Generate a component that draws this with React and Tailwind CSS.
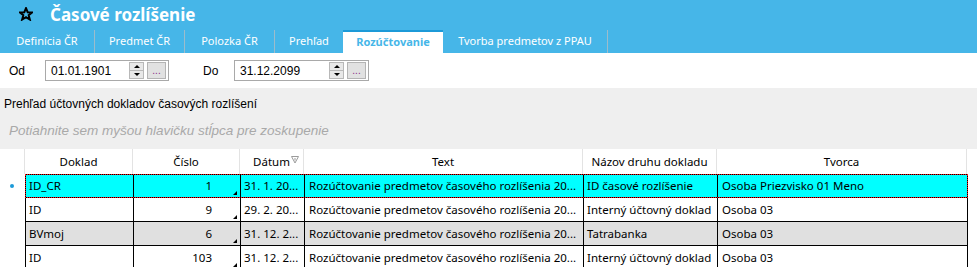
import React from "react";

const seg = { fontFamily: '"Noto Sans", "Open Sans", sans-serif' };
const ari = { fontFamily: '"Liberation Sans", Arial, sans-serif' };

function Star() {
  return (
    <svg width="14" height="14" viewBox="0 0 24 24" className="block">
      <polygon
        points="12,2 14.9,8.9 22.5,9.3 16.6,14.1 18.6,21.5 12,17.3 5.4,21.5 7.4,14.1 1.5,9.3 9.1,8.9"
        fill="none"
        stroke="#000"
        strokeWidth="3.4"
        strokeLinejoin="miter"
      />
    </svg>
  );
}

function DateBox({ value, width }) {
  return (
    <div
      className="flex items-center h-[21px] border border-[#a9a9a9] bg-white pl-[5px] pr-[2px]"
      style={{ width }}
    >
      <span className="flex-1 text-[12px] text-black leading-none" style={ari}>
        {value}
      </span>
      <div className="flex flex-col w-[15px] h-[17px] mr-[3px]">
        <div className="flex-1 flex items-center justify-center bg-[#e8e8e8] border border-[#b8b8b8]">
          <div className="w-0 h-0 border-l-[3px] border-r-[3px] border-b-[3px] border-l-transparent border-r-transparent border-b-black" />
        </div>
        <div className="flex-1 flex items-center justify-center bg-[#e8e8e8] border border-t-0 border-[#b8b8b8]">
          <div className="w-0 h-0 border-l-[3px] border-r-[3px] border-t-[3px] border-l-transparent border-r-transparent border-t-black" />
        </div>
      </div>
      <div className="w-[19px] h-[17px] bg-[#e1e1e1] border border-[#b4b4b4] flex items-end justify-center pb-[2px]">
        <span className="text-[10px] leading-none text-[#8a2f8a]" style={ari}>...</span>
      </div>
    </div>
  );
}

const cols = [25, 108, 107, 64, 279, 134, 250];

const rows = [
  { bg: "bg-[#00ffff]", focus: true, d: "ID_CR", c: "1", dt: "31. 1. 20...", n: "ID časové rozlíšenie", t: "Osoba Priezvisko 01 Meno" },
  { bg: "bg-white", d: "ID", c: "9", dt: "29. 2. 20...", n: "Interný účtovný doklad", t: "Osoba 03" },
  { bg: "bg-[#e0e0e0]", d: "BVmoj", c: "6", dt: "31. 12. 2...", n: "Tatrabanka", t: "Osoba 03" },
  { bg: "bg-white", d: "ID", c: "103", dt: "31. 12. 2...", n: "Interný účtovný doklad", t: "Osoba 03" },
];

export default function App() {
  return (
    <div className="w-[977px] h-[267px] overflow-hidden bg-white relative">
      {/* Header */}
      <div className="bg-[#46b6e8] h-[53px] flex flex-col">
        <div className="h-[30px] flex items-center">
          <div className="w-[50px] flex justify-center pl-[2px] pb-[2px]">
            <Star />
          </div>
          <span className="text-white font-bold text-[17px] leading-none pb-[2px]" style={seg}>
            Časové rozlíšenie
          </span>
        </div>
        <div className="h-[23px] flex text-[11px] text-white" style={seg}>
          <div className="w-[95px] border-r border-[#9dbccb] flex items-center justify-center">Definícia ČR</div>
          <div className="w-[90px] border-r border-[#9dbccb] flex items-center justify-center">Predmet ČR</div>
          <div className="w-[90px] border-r border-[#9dbccb] flex items-center justify-center">Polozka ČR</div>
          <div className="w-[68px] flex items-center justify-center">Prehľad</div>
          <div className="w-[100px] bg-white border-t-2 border-[#1c9ad8] flex items-center justify-center font-bold text-[#46b6e8]">
            Rozúčtovanie
          </div>
          <div className="w-[165px] border-r border-[#9dbccb] flex items-center justify-center">Tvorba predmetov z PPAU</div>
        </div>
      </div>

      {/* Filter row */}
      <div className="h-[35px] flex items-center text-[12px]" style={ari}>
        <span className="w-[45px] pl-[9px] pt-[1px]">Od</span>
        <DateBox value="01.01.1901" width={124} />
        <span className="w-[34px]" />
        <span className="w-[31px] pt-[1px]">Do</span>
        <DateBox value="31.12.2099" width={135} />
      </div>

      {/* Gray panel */}
      <div className="bg-[#efefef] h-[61px] flex flex-col" style={ari}>
        <div className="h-[30px] flex items-center pl-[4px] pt-[2px] text-[12px] text-black">
          Prehľad účtovných dokladov časových rozlíšení
        </div>
        <div className="h-[31px] flex items-center pl-[9px] text-[13.5px] italic text-[#a9a9a9] pb-[4px]">
          Potiahnite sem myšou hlavičku stĺpca pre zoskupenie
        </div>
      </div>

      {/* Grid */}
      <div className="text-[11.5px] text-black" style={seg}>
        <div className="h-[25px] flex">
          {["", "Doklad", "Číslo", "Dátum", "Text", "Názov druhu dokladu", "Tvorca"].map((h, i) => (
            <div
              key={i}
              className="h-full flex items-center justify-center border-r border-[#e3e3e3] relative"
              style={{ width: cols[i] }}
            >
              {h}
              {h === "Dátum" && (
                <svg width="8" height="8" viewBox="0 0 8 8" className="absolute right-[4px] top-[7px]">
                  <polygon points="0.5,0.5 7.5,0.5 4,7" fill="none" stroke="#9a9a9a" strokeWidth="1" />
                  <line x1="4" y1="2" x2="4" y2="4.5" stroke="#9a9a9a" strokeWidth="1" />
                </svg>
              )}
            </div>
          ))}
        </div>
        {rows.map((r, ri) => (
          <div key={ri} className="flex h-[24px]">
            <div className="w-[25px] h-full flex items-center justify-center bg-white">
              {r.focus && <div className="w-[4px] h-[4px] rounded-full bg-[#1c9ad8] mr-[2px]" />}
            </div>
            <div
              className={`flex h-full border-l border-b border-black ${r.bg} ${ri === 0 ? "border-t outline outline-1 outline-dotted outline-[#ff1010] -outline-offset-1" : ""}`}
            >
              <div className="w-[108px] h-full border-r border-black flex items-center pl-[3px] truncate">{r.d}</div>
              <div className="w-[107px] h-full border-r border-black flex items-center justify-end pr-[28px] relative">
                {r.c}
                <div className="absolute right-[3px] bottom-[2px] w-0 h-0 border-l-[4px] border-l-transparent border-b-[4px] border-b-black" />
              </div>
              <div className="w-[64px] h-full border-r border-black flex items-center pl-[3px] whitespace-nowrap overflow-hidden">{r.dt}</div>
              <div className="w-[279px] h-full border-r border-black flex items-center pl-[4px] whitespace-nowrap overflow-hidden">
                Rozúčtovanie predmetov časového rozlíšenia 20...
              </div>
              <div className="w-[134px] h-full border-r border-black flex items-center pl-[3px] whitespace-nowrap overflow-hidden">{r.n}</div>
              <div className="w-[250px] h-full border-r border-black flex items-center pl-[4px] whitespace-nowrap overflow-hidden">{r.t}</div>
            </div>
          </div>
        ))}
      </div>
    </div>
  );
}
